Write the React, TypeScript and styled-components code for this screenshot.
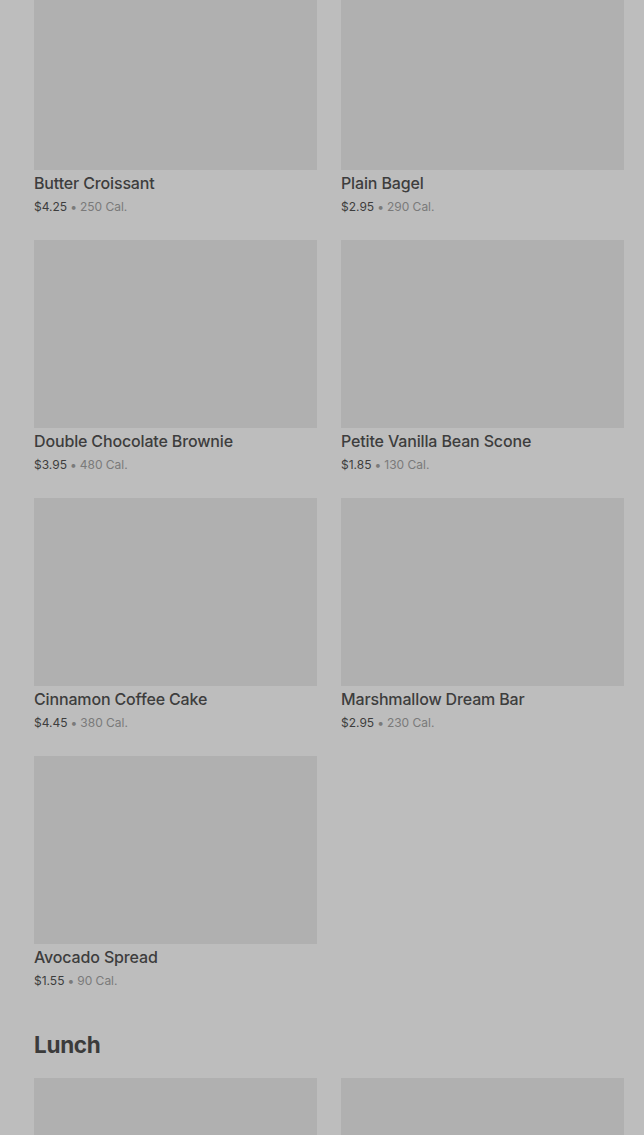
import React from 'react'
import styled, { createGlobalStyle } from 'styled-components'

interface MenuItem {
  name?: string
  price?: string
  cal?: number
}

const breakfast: MenuItem[] = [
  { name: 'Butter Croissant', price: '$4.25', cal: 250 },
  { name: 'Plain Bagel', price: '$2.95', cal: 290 },
  { name: 'Double Chocolate Brownie', price: '$3.95', cal: 480 },
  { name: 'Petite Vanilla Bean Scone', price: '$1.85', cal: 130 },
  { name: 'Cinnamon Coffee Cake', price: '$4.45', cal: 380 },
  { name: 'Marshmallow Dream Bar', price: '$2.95', cal: 230 },
  { name: 'Avocado Spread', price: '$1.55', cal: 90 },
]

// only the top of the lunch pictures is in view
const lunch: MenuItem[] = [{}, {}]

const GlobalStyle = createGlobalStyle`
  html, body {
    margin: 0;
    padding: 0;
    background: #bdbdbd;
    overflow: hidden;
  }
  body {
    font-family: Inter, "Noto Sans", sans-serif;
    -webkit-font-smoothing: antialiased;
  }
`

const Page = styled.main`
  height: 1135px;
  overflow: hidden;
  background: #bdbdbd;
`

const Content = styled.div`
  margin-top: -18px;
  padding: 0 20px 0 34px;
`

const Section = styled.section`
  & + & {
    margin-top: 39px;
  }
`

const SectionTitle = styled.h2`
  margin: 0 0 17px;
  font-size: 22.5px;
  line-height: 32px;
  font-weight: 700;
  letter-spacing: -0.3px;
  color: #3b3b3b;
`

const Grid = styled.div`
  display: grid;
  grid-template-columns: repeat(2, 1fr);
  column-gap: 24px;
  row-gap: 24px;
`

const Card = styled.div`
  display: flex;
  flex-direction: column;
`

const Thumb = styled.div`
  height: 188px;
  background: #b0b0b0;
`

const Name = styled.div`
  margin-top: 2px;
  font-size: 16px;
  line-height: 22px;
  font-weight: 500;
  color: #3d3d3d;
  letter-spacing: -0.15px;
`

const Meta = styled.div`
  margin-top: 3px;
  font-size: 12px;
  line-height: 19px;
  color: #7a7a7a;
`

const Price = styled.span`
  color: #3d3d3d;
`

const Dot = styled.span`
  margin: 0 3px;
`

const ItemCard: React.FC<{ item: MenuItem }> = ({ item }) => (
  <Card>
    <Thumb />
    {item.name && (
      <>
        <Name>{item.name}</Name>
        <Meta>
          <Price>{item.price}</Price>
          <Dot>•</Dot>
          {item.cal} Cal.
        </Meta>
      </>
    )}
  </Card>
)

export default function App() {
  return (
    <Page>
      <GlobalStyle />
      <Content>
        <Section>
          <Grid>
            {breakfast.map((item, i) => (
              <ItemCard key={i} item={item} />
            ))}
          </Grid>
        </Section>
        <Section>
          <SectionTitle>Lunch</SectionTitle>
          <Grid>
            {lunch.map((item, i) => (
              <ItemCard key={i} item={item} />
            ))}
          </Grid>
        </Section>
      </Content>
    </Page>
  )
}
